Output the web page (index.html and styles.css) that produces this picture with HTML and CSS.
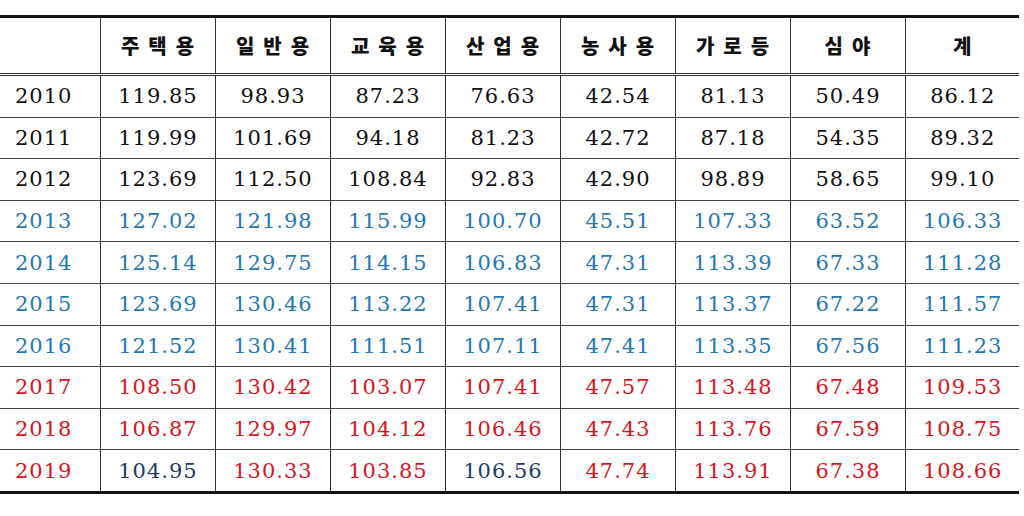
FILE: index.html
```html
<!DOCTYPE html>
<html>
<head>
<meta charset="utf-8">
<link rel="stylesheet" href="styles.css">
</head>
<body>
<table class="tbl">
  <colgroup>
    <col class="c-year">
    <col class="c-val"><col class="c-val"><col class="c-val"><col class="c-val">
    <col class="c-val"><col class="c-val"><col class="c-val"><col class="c-last">
  </colgroup>
  <thead>
    <tr>
      <th></th><th>주택용</th><th>일반용</th><th>교육용</th><th>산업용</th><th>농사용</th><th>가로등</th><th>심야</th><th>계</th>
    </tr>
  </thead>
  <tbody>
    <tr class="k"><td>2010</td><td>119.85</td><td>98.93</td><td>87.23</td><td>76.63</td><td>42.54</td><td>81.13</td><td>50.49</td><td>86.12</td></tr>
    <tr class="k"><td>2011</td><td>119.99</td><td>101.69</td><td>94.18</td><td>81.23</td><td>42.72</td><td>87.18</td><td>54.35</td><td>89.32</td></tr>
    <tr class="k"><td>2012</td><td>123.69</td><td>112.50</td><td>108.84</td><td>92.83</td><td>42.90</td><td>98.89</td><td>58.65</td><td>99.10</td></tr>
    <tr class="b"><td>2013</td><td>127.02</td><td>121.98</td><td>115.99</td><td>100.70</td><td>45.51</td><td>107.33</td><td>63.52</td><td>106.33</td></tr>
    <tr class="b"><td>2014</td><td>125.14</td><td>129.75</td><td>114.15</td><td>106.83</td><td>47.31</td><td>113.39</td><td>67.33</td><td>111.28</td></tr>
    <tr class="b"><td>2015</td><td>123.69</td><td>130.46</td><td>113.22</td><td>107.41</td><td>47.31</td><td>113.37</td><td>67.22</td><td>111.57</td></tr>
    <tr class="b"><td>2016</td><td>121.52</td><td>130.41</td><td>111.51</td><td>107.11</td><td>47.41</td><td>113.35</td><td>67.56</td><td>111.23</td></tr>
    <tr class="r"><td>2017</td><td>108.50</td><td>130.42</td><td>103.07</td><td>107.41</td><td>47.57</td><td>113.48</td><td>67.48</td><td>109.53</td></tr>
    <tr class="r"><td>2018</td><td>106.87</td><td>129.97</td><td>104.12</td><td>106.46</td><td>47.43</td><td>113.76</td><td>67.59</td><td>108.75</td></tr>
    <tr class="r last"><td>2019</td><td class="n">104.95</td><td>130.33</td><td>103.85</td><td class="n">106.56</td><td>47.74</td><td>113.91</td><td>67.38</td><td>108.66</td></tr>
  </tbody>
</table>
</body>
</html>
```

FILE: styles.css
```css
html, body {
  margin: 0;
  padding: 0;
  background: #ffffff;
}

.tbl {
  margin-top: 15px;
  width: 1019px;
  border-collapse: collapse;
  table-layout: fixed;
}

.c-year { width: 100px; }
.c-val { width: 115px; }
.c-last { width: 114px; }

.tbl th {
  height: 55px;
  padding: 0;
  border-top: 3px solid #111;
  border-bottom: 3px double #333;
  border-left: 1px solid #333;
  font-family: "Noto Sans CJK KR", "Noto Sans", sans-serif;
  font-weight: 900;
  font-size: 20px;
  letter-spacing: 9px;
  text-indent: 9px;
  color: #111;
  text-align: center;
  vertical-align: middle;
}

.tbl th:first-child { border-left: none; }

.tbl td {
  height: 38.6px;
  padding: 1px 0 1px 0;
  border-top: 1px solid #444;
  border-left: 1px solid #333;
  font-family: "DejaVu Serif", "Liberation Serif", serif;
  font-size: 21px;
  letter-spacing: 1px;
  text-indent: 1px;
  text-align: center;
  vertical-align: middle;
}

.tbl td:first-child {
  border-left: none;
  text-align: left;
  text-indent: 0;
  padding-left: 15px;
}

.tbl tr.last td { border-bottom: 3px solid #111; }

.k td { color: #111; }
.b td { color: #1f78b4; }
.r td { color: #d9141c; }
.r td.n { color: #203a6b; }
```
